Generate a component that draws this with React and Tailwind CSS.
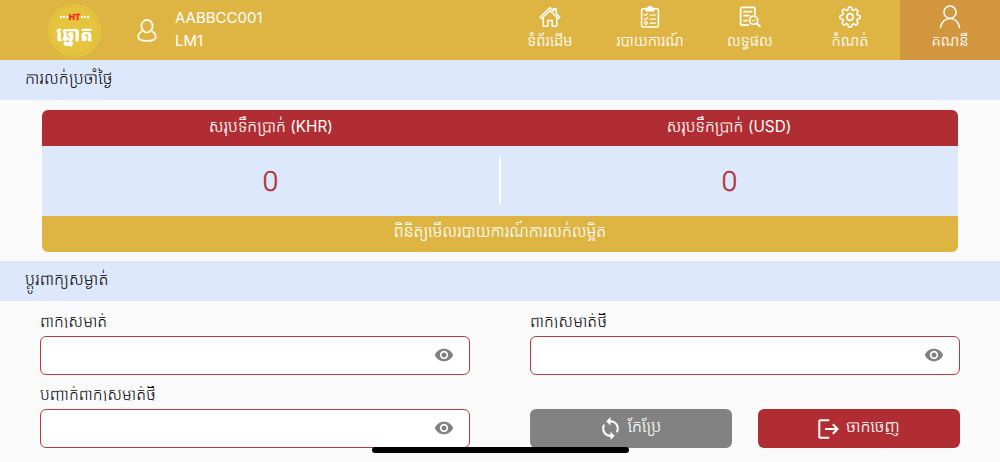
import React, { useState } from 'react';
import { MdSync, MdVisibility, MdVisibilityOff } from 'react-icons/md';

const HomeIcon = () => (
  <svg viewBox="0 0 22 22" className="w-[22px] h-[22px]" fill="none" stroke="currentColor" strokeWidth="1.5" strokeLinejoin="round">
    <path d="M1.2 11 11 1.8l3.6 3.4V2.7h2.6v4.9l3.6 3.4-1.5 1.5L11 4.8l-8.3 7.7z" />
    <path d="M4.2 11.4v8.9h4.6v-5.8h4.4v5.8h4.6v-8.9" />
  </svg>
);

const ReportIcon = () => (
  <svg viewBox="0 0 22 22" className="w-[22px] h-[22px]" fill="none" stroke="currentColor" strokeWidth="1.6" strokeLinecap="round" strokeLinejoin="round">
    <rect x="2.6" y="2.8" width="16.8" height="18.2" rx="1.6" />
    <path d="M7.2 4.6V2.2h2.2a1.6 1.6 0 0 1 3.2 0h2.2v2.4z" fill="currentColor" />
    <path d="m5.4 8.5 1.1 1.1 2.2-2.2M5.4 12.8l1.1 1.1 2.2-2.2M11 9h5.5M11 13.1h5.5M11 17.2h5.5" strokeWidth="1.2" />
    <circle cx="6.9" cy="17.1" r="1.4" strokeWidth="1.2" />
  </svg>
);

const ResultIcon = () => (
  <svg viewBox="0 0 22 22" className="w-[22px] h-[22px]" fill="none" stroke="currentColor" strokeWidth="1.8" strokeLinecap="round" strokeLinejoin="round">
    <path d="M9.5 19.2H3.2a1.6 1.6 0 0 1-1.6-1.6V2.9a1.6 1.6 0 0 1 1.6-1.6h11.2A1.6 1.6 0 0 1 16 2.9v5.5" />
    <path d="M5 5.6h7.6M5 9.6h5M5 14.6h3" />
    <circle cx="14.6" cy="14.2" r="4.1" strokeWidth="1.6" />
    <path d="m17.7 17.3 3 3" strokeWidth="2.2" />
    <path d="m13 14.2 1.2 1.1 2-2" strokeWidth="1" />
  </svg>
);

const GearIcon = () => (
  <svg viewBox="0 0 22 22" className="w-[22px] h-[22px]" fill="none" stroke="currentColor" strokeWidth="1.6" strokeLinejoin="round">
    <path d="M9.3 2q0-.9.9-.9h1.6q.9 0 .9.9l.4 1.8 1.5.6 1.6-1q.7-.5 1.3.1l1.1 1.1q.6.6.1 1.3l-1 1.6.6 1.5 1.8.4q.9.1.9.9v1.6q0 .9-.9.9l-1.8.4-.6 1.5 1 1.6q.5.7-.1 1.3l-1.1 1.1q-.6.6-1.3.1l-1.6-1-1.5.6-.4 1.8q-.1.9-.9.9h-1.6q-.9 0-.9-.9l-.4-1.8-1.5-.6-1.6 1q-.7.5-1.3-.1l-1.1-1.1q-.6-.6-.1-1.3l1-1.6-.6-1.5-1.8-.4q-.9-.1-.9-.9v-1.6q0-.9.9-.9l1.8-.4.6-1.5-1-1.6q-.5-.7.1-1.3l1.1-1.1q.6-.6 1.3-.1l1.6 1 1.5-.6z" />
    <circle cx="11" cy="11" r="3.2" strokeWidth="1.9" />
  </svg>
);

const AccountIcon = () => (
  <svg viewBox="0 0 22 24" className="w-[22px] h-[24px]" fill="none" stroke="currentColor" strokeWidth="1.5" strokeLinecap="round">
    <circle cx="11" cy="7.2" r="6.1" />
    <path d="M1.5 22.6c.8-5.3 4.5-9.2 9.5-9.2s8.7 3.9 9.5 9.2" />
  </svg>
);

const UserIcon = () => (
  <svg viewBox="0 0 20 23" className="w-[20px] h-[23px]" fill="none" stroke="currentColor" strokeWidth="1.7" strokeLinejoin="round">
    <ellipse cx="10" cy="7.2" rx="5.6" ry="6.3" />
    <path d="M5 12.2C2.6 13.4 1.2 15.5 1.2 18c0 2.9 3.4 3.9 8.8 3.9s8.8-1 8.8-3.9c0-2.5-1.4-4.6-3.8-5.8" />
  </svg>
);

const ExitIcon = () => (
  <svg viewBox="0 0 21 20" className="w-[21px] h-[20px]" fill="none" stroke="currentColor" strokeWidth="2">
    <path d="M11.2 1.2H2.3a1 1 0 0 0-1 1v15.6a1 1 0 0 0 1 1h8.9M7 10h12.5M14.8 5.2 19.6 10l-4.8 4.8" />
  </svg>
);

const Logo = () => (
  <div className="flex h-[53px] w-[53px] items-center justify-center rounded-full bg-[#e6c53e]">
    <div className="flex h-[49px] w-[49px] flex-col items-center rounded-full border border-[#dfb93f] pt-[6px] text-white">
      <div className="flex h-2 items-center gap-px font-['Liberation_Sans',sans-serif] text-[8.5px] font-bold leading-[8px]">
        <span className="h-0.5 w-2 border-b-2 border-dotted border-white" />
        <span className="text-[#ee2c22] [-webkit-text-stroke:0.4px_#ee2c22]">HT</span>
        <span className="h-0.5 w-2 border-b-2 border-dotted border-white" />
      </div>
      <span className="mt-[2px] scale-y-[1.1] text-[18.5px] font-bold leading-[20px] [-webkit-text-stroke:0.3px_white]">ឆ្នោត</span>
    </div>
  </div>
);

const navItems = [
  { label: 'ទំព័រដើម', icon: HomeIcon },
  { label: 'របាយការណ៍', icon: ReportIcon },
  { label: 'លទ្ធផល', icon: ResultIcon },
  { label: 'កំណត់', icon: GearIcon },
  { label: 'គណនី', icon: AccountIcon },
];

const SectionTitle = ({ children }) => (
  <h2 className="h-10 bg-[#dee8fc] pl-[25px] text-[16.4px] font-light leading-[37px] text-black">{children}</h2>
);

const PasswordField = ({ label }) => {
  const [visible, setVisible] = useState(false);

  return (
    <div>
      <label className="block h-[15px] overflow-hidden whitespace-nowrap text-[16px] font-light leading-[16px] text-black">{label}</label>
      <div className="mt-[8px] flex h-[39px] items-center rounded-md border border-[#b83a40] bg-white pr-[15px]">
        <input type={visible ? 'text' : 'password'} className="h-full min-w-0 flex-1 px-3 outline-none" />
        <button type="button" onClick={() => setVisible(!visible)} className="-mt-0.5 text-[#808080]">
          {visible ? <MdVisibilityOff size={20} /> : <MdVisibility size={20} />}
        </button>
      </div>
    </div>
  );
};

const App = () => {
  const [active, setActive] = useState(4);

  return (
    <div className="relative h-[462px] w-[1000px] overflow-hidden bg-[#fafafa] font-['Inter','Noto_Sans_Khmer','Noto_Sans',sans-serif]">
      <header className="flex h-[60px] bg-[#deb443] text-white">
        <div className="flex w-[500px] items-center pl-[48px]">
          <Logo />
          <div className="ml-[36px]">
            <UserIcon />
          </div>
          <div className="-mt-0.5 ml-[18px] text-[15px] leading-[23px]">
            <p>AABBCC001</p>
            <p>LM1</p>
          </div>
        </div>
        <nav className="grid w-[500px] grid-cols-5">
          {navItems.map((item, idx) => (
            <button
              key={item.label}
              onClick={() => setActive(idx)}
              className={`flex flex-col items-center pt-[5px] ${idx === active ? 'bg-[#d2963e]' : ''}`}
            >
              <span className="flex h-6 items-center">
                <item.icon />
              </span>
              <span className="whitespace-nowrap text-[15.2px] font-light leading-[23px] [-webkit-text-stroke:0.15px_white]">{item.label}</span>
            </button>
          ))}
        </nav>
      </header>

      <SectionTitle>ការលក់ប្រចាំថ្ងៃ</SectionTitle>

      <section className="mx-[42px] mt-[10px] overflow-hidden rounded-md">
        <div className="grid h-9 grid-cols-2 bg-[#b02e33] text-center text-[16px] font-light leading-[32px] text-white [-webkit-text-stroke:0.15px_white]">
          <span>សរុបទឹកប្រាក់ <span className="text-[15.3px] font-normal [-webkit-text-stroke:0]">(KHR)</span></span>
          <span>សរុបទឹកប្រាក់ <span className="text-[15.3px] font-normal [-webkit-text-stroke:0]">(USD)</span></span>
        </div>
        <div className="flex h-[70px] items-center bg-[#dee8fc] pb-px text-center font-[Roboto,sans-serif] text-[28.5px] font-light text-[#b02e33] [-webkit-text-stroke:0.4px_#b02e33]">
          <span className="flex-1 pt-[3px]">0</span>
          <span className="h-[47px] w-[2px] bg-white" />
          <span className="flex-1 pt-[3px]">0</span>
        </div>
        <button className="flex h-9 w-full justify-center bg-[#deb443] text-[16.1px] font-light leading-[30px] text-white [-webkit-text-stroke:0.15px_white]">
          ពិនិត្យមើលរបាយការណ៍ការលក់លម្អិត
        </button>
      </section>

      <div className="mt-[9px]">
        <SectionTitle>ប្តូរពាក្យសម្ងាត់</SectionTitle>
      </div>

      <form className="mx-10 mt-[12px] grid grid-cols-[430px_430px] gap-x-[60px] gap-y-[11px]">
        <PasswordField label="ពាក្យសម្ងាត់" />
        <PasswordField label="ពាក្យសម្ងាត់ថ្មី" />
        <PasswordField label="បញ្ជាក់ពាក្យសម្ងាត់ថ្មី" />
        <div className="grid grid-cols-2 items-end gap-[26px] text-[16.3px] font-light text-white [-webkit-text-stroke:0.15px_white]">
          <button type="button" className="flex h-[39px] items-center justify-center gap-[5px] rounded-md bg-[#828282] pr-[3px]">
            <MdSync size={25} />
            <span className="-mt-1">កែប្រែ</span>
          </button>
          <button type="button" className="flex h-[39px] items-center justify-center gap-[7px] rounded-md bg-[#b02e33]">
            <ExitIcon />
            <span className="-mt-1">ចាកចេញ</span>
          </button>
        </div>
      </form>

      {/* home indicator */}
      <div className="absolute left-[372px] top-[447px] h-[6px] w-[257px] rounded-full bg-black" />
    </div>
  );
};

export default App;
